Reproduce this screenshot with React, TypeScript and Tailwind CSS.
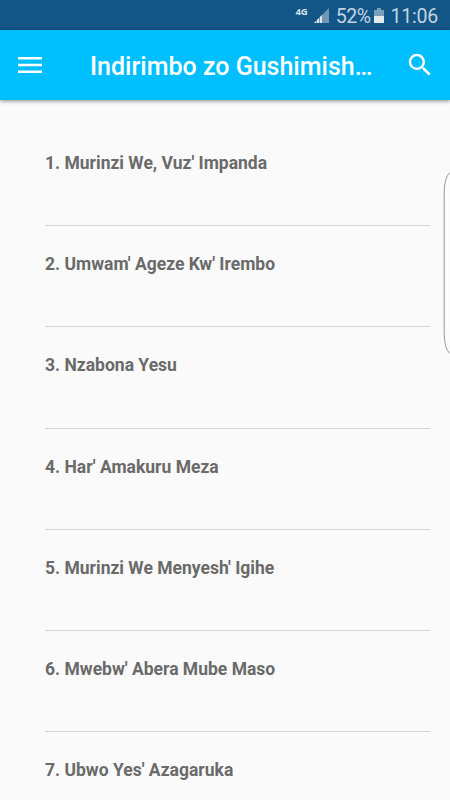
import React from "react";

const songs = [
  "Murinzi We, Vuz' Impanda",
  "Umwam' Ageze Kw' Irembo",
  "Nzabona Yesu",
  "Har' Amakuru Meza",
  "Murinzi We Menyesh' Igihe",
  "Mwebw' Abera Mube Maso",
  "Ubwo Yes' Azagaruka",
];

const StatusBar = () => {
  return (
    <div className="flex h-[30px] shrink-0 items-start justify-end bg-[#125688] pr-[13px] text-[#c3d4e1]">
      <span className="mt-[7px] mr-[6px] font-['Open_Sans',sans-serif] text-[9.5px] leading-[10px] font-bold text-[#d6e2eb]">
        4G
      </span>
      <svg width="15" height="15" viewBox="0 0 15 15" className="mt-2">
        <path d="M15 0V15H0Z" fill="#6f98b6" />
        <path
          d="M0 15L2 13V15ZM3 15V12L5 10V15ZM6 15V9L8 7V15Z"
          fill="#dfe8ef"
        />
      </svg>
      <span className="mt-[5px] ml-[7px] text-[19.5px] leading-[23px] tracking-[-0.5px]">
        52%
      </span>
      <svg width="10" height="15" viewBox="0 0 10 15" className="mt-2 ml-1">
        <path d="M3 0H7V2H10V8H0V2H3Z" fill="#799fba" />
        <path d="M0 8H10V15H0Z" fill="#e1eaf0" />
      </svg>
      <span className="mt-[5px] ml-[6px] -mr-px text-[19.5px] leading-[23px] tracking-[-0.2px]">
        11:06
      </span>
    </div>
  );
};

const Header = () => {
  return (
    <header className="z-10 flex h-[70px] shrink-0 items-center bg-[#00bfff] text-white shadow-[0_1px_4px_rgba(0,0,0,0.45)]">
      <button className="ml-[18px]" aria-label="Menu">
        <svg width="24" height="16" viewBox="0 0 24 16" fill="currentColor">
          <path d="M0 0H24V2.5H0ZM0 6.7H24V9.3H0ZM0 13.5H24V16H0Z" />
        </svg>
      </button>
      <h1 className="ml-12 w-[315px] pt-1 text-[25px] leading-[30px] font-medium whitespace-nowrap">
        Indirimbo zo Gushimish…
      </h1>
      <button aria-label="Search">
        <svg width="30" height="30" viewBox="0 0 24 24" fill="currentColor">
          <path d="M15.5 14h-.79l-.28-.27A6.471 6.471 0 0 0 16 9.5 6.5 6.5 0 1 0 9.5 16c1.61 0 3.09-.59 4.23-1.57l.27.28v.79l5 4.99L20.49 19l-4.99-5zm-6 0C7.01 14 5 11.99 5 9.5S7.01 5 9.5 5 14 7.01 14 9.5 11.99 14 9.5 14z" />
        </svg>
      </button>
    </header>
  );
};

const App = () => {
  return (
    <div className="relative flex h-screen w-full flex-col overflow-hidden bg-[#fafafa] font-['Roboto',sans-serif]">
      <StatusBar />
      <Header />
      <ul className="mt-[24.8px] mr-5 ml-[45px]">
        {songs.map((song, index) => (
          <li
            key={song}
            className="h-[101.25px] border-b border-[#d5d5d5] pt-[28.2px] text-[17.5px] leading-[21px] font-bold text-[#6a6a6a]"
          >
            {index + 1}. {song}
          </li>
        ))}
      </ul>
      {/* edge panel handle */}
      <svg
        width="7"
        height="184"
        viewBox="0 0 7 184"
        fill="none"
        className="absolute top-[171px] right-0"
      >
        <path
          d="M7 1.5C3 5 1.2 12 1.2 24V160C1.2 172 3 179 7 182.5"
          fill="#fcfcfc"
          stroke="#999"
        />
      </svg>
    </div>
  );
};

export default App;
